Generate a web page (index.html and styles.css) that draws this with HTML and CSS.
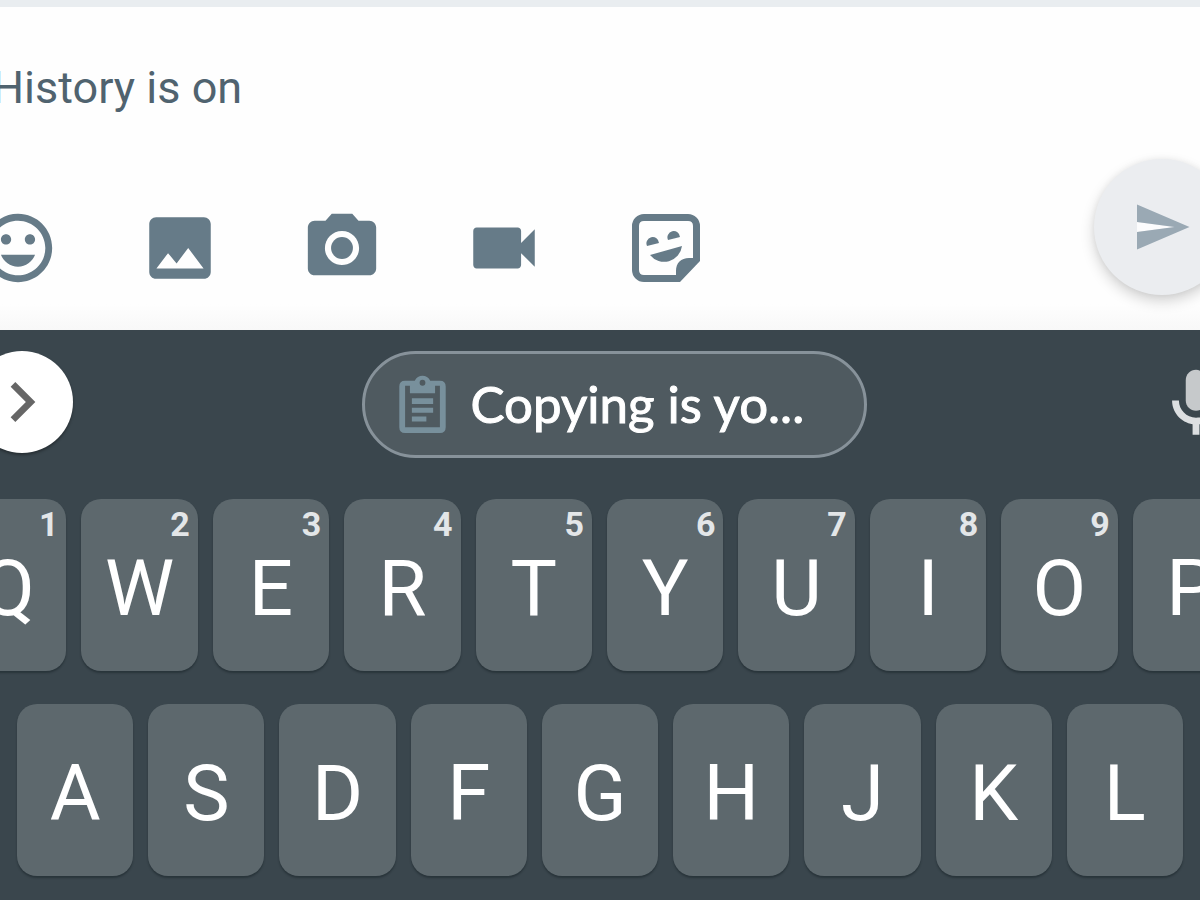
FILE: index.html
```html
<!DOCTYPE html>
<html lang="en">
<head>
<meta charset="utf-8">
<meta name="viewport" content="width=device-width, initial-scale=1">
<title>Chat</title>
<link rel="stylesheet" href="styles.css">
</head>
<body>
<main class="composer">
  <label class="history" for="message">History is on</label>
  <input class="message" id="message" type="text">
  <div class="tools">
    <div class="attachments">
      <button class="tool" type="button" aria-label="Emoji"><svg viewBox="0 0 24 24"><path d="M11.99 2C6.47 2 2 6.48 2 12s4.47 10 9.99 10C17.52 22 22 17.52 22 12S17.52 2 11.99 2zM12 20c-4.42 0-8-3.58-8-8s3.58-8 8-8 8 3.58 8 8-3.580 8-8 8zm3.500-9c.83 0 1.500-.67 1.500-1.500S16.330 8 15.500 8 14 8.670 14 9.500s.67 1.500 1.500 1.500zm-7 0c.83 0 1.500-.67 1.500-1.500S9.330 8 8.500 8 7 8.670 7 9.500 7.670 11 8.500 11zM7 14c.8 2.050 2.700 3.500 5 3.500s4.200-1.450 5-3.500z"/></svg></button>
      <button class="tool" type="button" aria-label="Image"><svg viewBox="0 0 24 24"><path fill-rule="evenodd" d="M21 19V5c0-1.100-.9-2-2-2H5c-1.100 0-2 .9-2 2v14c0 1.100.9 2 2 2h14c1.100 0 2-.9 2-2zM8.500 13.500L11 16.500 14.400 12 18.900 18H5.100z"/></svg></button>
      <button class="tool" type="button" aria-label="Camera"><svg viewBox="0 0 24 24"><circle cx="12" cy="12" r="3.200"/><path d="M9 2L7.170 4H4c-1.100 0-2 .9-2 2v12c0 1.100.9 2 2 2h16c1.100 0 2-.9 2-2V6c0-1.100-.9-2-2-2h-3.170L15 2H9zm3 15c-2.760 0-5-2.240-5-5s2.240-5 5-5 5 2.240 5 5-2.240 5-5 5z"/></svg></button>
      <button class="tool" type="button" aria-label="Video"><svg viewBox="0 0 24 24"><path d="M17 10.500V7c0-.55-.45-1-1-1H4c-.55 0-1 .45-1 1v10c0 .55.45 1 1 1h12c.55 0 1-.45 1-1v-3.500l4 4v-11l-4 4z"/></svg></button>
      <button class="tool" type="button" aria-label="Sticker"><svg viewBox="0 0 68 68"><path fill-rule="evenodd" d="M12 0H56A12 12 0 0 1 68 12V47L48 68H12A12 12 0 0 1 0 56V12A12 12 0 0 1 12 0zM12 7Q7 7 7 12V56Q7 61 12 61H44V57C44 49 49 44 57 44H61V12Q61 7 56 7z"/><path d="M15 32A6.300 6.300 0 1 1 27 29zM36 26A6.300 6.300 0 1 1 48 23zM18 41L50 32A18 18 0 0 1 18 41z"/></svg></button>
    </div>
    <button class="send" type="button" aria-label="Send"><svg viewBox="0 0 24 24"><path class="send-gap" d="M2 10l15 2-15 2z"/><path d="M2 21L23 12 2 3v7l15 2-15 2z"/></svg></button>
  </div>
</main>
<section class="keyboard" aria-label="Keyboard">
  <div class="strip">
    <button class="expand" type="button" aria-label="More"><svg viewBox="0 0 24 24"><path d="M10 6L8.590 7.410 13.170 12l-4.580 4.590L10 18l6-6z"/></svg></button>
    <button class="clip" type="button">
      <svg viewBox="0 0 48 60"><path fill-rule="evenodd" d="M6 6H16C19-1 29-1 32 6H42Q48 6 48 12V54Q48 60 42 60H6Q0 60 0 54V12Q0 6 6 6zM6 11V54H42V11H37V19H11V11zM24 5A3 3 0 1 0 24 11A3 3 0 1 0 24 5zM13 24H35V30H13zM13 34H35V39H13zM13 43H28V48H13z"/></svg>
      <span>Copying is yo...</span>
    </button>
    <button class="mic" type="button" aria-label="Voice input"><svg viewBox="0 0 24 24"><path class="mic-head" d="M12 14c1.660 0 3-1.340 3-3V5c0-1.660-1.340-3-3-3S9 3.340 9 5v6c0 1.660 1.340 3 3 3z"/><path d="M17 11c0 2.760-2.240 5-5 5s-5-2.240-5-5H5c0 3.530 2.610 6.430 6 6.920V21h2v-3.080c3.390-.49 6-3.390 6-6.920h-2z"/></svg></button>
  </div>
  <div class="row row-top">
    <button class="key" type="button">Q<span class="hint">1</span></button>
    <button class="key" type="button">W<span class="hint">2</span></button>
    <button class="key" type="button">E<span class="hint">3</span></button>
    <button class="key" type="button">R<span class="hint">4</span></button>
    <button class="key" type="button">T<span class="hint">5</span></button>
    <button class="key" type="button">Y<span class="hint">6</span></button>
    <button class="key" type="button">U<span class="hint">7</span></button>
    <button class="key" type="button">I<span class="hint">8</span></button>
    <button class="key" type="button">O<span class="hint">9</span></button>
    <button class="key" type="button">P</button>
  </div>
  <div class="row row-home">
    <button class="key" type="button">A</button>
    <button class="key" type="button">S</button>
    <button class="key" type="button">D</button>
    <button class="key" type="button">F</button>
    <button class="key" type="button">G</button>
    <button class="key" type="button">H</button>
    <button class="key" type="button">J</button>
    <button class="key" type="button">K</button>
    <button class="key" type="button">L</button>
  </div>
</section>
</body>
</html>
```
FILE: styles.css
```css
* {
  box-sizing: border-box;
}

body {
  margin: 0;
  min-height: 100vh;
  display: flex;
  flex-direction: column;
  overflow: hidden;
  background: #3a464d;
  font-family: Roboto, "Noto Sans", sans-serif;
}

button {
  margin: 0;
  padding: 0;
  border: 0;
  background: none;
  color: inherit;
  font: inherit;
  flex-shrink: 0;
}

svg {
  display: block;
  fill: currentColor;
}

.composer {
  display: flex;
  flex-direction: column;
  border-top: 7px solid #e9edf0;
  padding-top: 51px;
  background: linear-gradient(#fefefe 92%, #f8f8f8);
}

.history {
  margin-left: -8px;
  color: #50636f;
  font-size: 45px;
  line-height: 60px;
}

.message {
  height: 32px;
  border: 0;
  padding: 0;
  outline: 0;
  background: transparent;
  font: inherit;
}

.tools {
  display: flex;
  justify-content: space-between;
  align-items: flex-start;
  height: 180px;
  padding-top: 9px;
}

.attachments {
  display: flex;
  gap: 80px;
  margin: 48px 0 0 -23px;
}

.tool {
  display: flex;
  align-items: center;
  justify-content: center;
  width: 82px;
  height: 82px;
  color: #667b88;
}

.tool svg {
  width: 82px;
  height: 82px;
}

.tool:last-child svg {
  width: 68px;
  height: 68px;
}

.send {
  display: flex;
  align-items: center;
  justify-content: center;
  width: 136px;
  height: 136px;
  margin-right: -30px;
  border-radius: 50%;
  background: #ebedf0;
  color: #9aa9b4;
  box-shadow: 0 6px 14px rgba(0, 0, 0, 0.18), 0 0 6px rgba(0, 0, 0, 0.05);
}

.send svg {
  width: 60px;
  height: 60px;
}

.send-gap {
  fill: #fcfcfd;
}

.keyboard {
  flex: 1;
  color: #fff;
}

.strip {
  display: flex;
  align-items: flex-start;
  justify-content: space-between;
  height: 169px;
  padding-top: 21px;
}

.expand {
  display: flex;
  align-items: center;
  justify-content: center;
  width: 102px;
  height: 102px;
  margin-left: -29px;
  border-radius: 50%;
  background: #fff;
  color: #666;
  box-shadow: 0 2px 3px rgba(0, 0, 0, 0.35);
}

.expand svg {
  width: 80px;
  height: 80px;
}

.clip {
  display: flex;
  align-items: center;
  gap: 24px;
  width: 505px;
  height: 107px;
  padding: 0 33px 2px;
  border: 3px solid #87929a;
  border-radius: 54px;
  background: #4f5a60;
  font-family: Lato, "Open Sans", sans-serif;
  font-size: 51px;
  -webkit-text-stroke: 1px currentColor;
  line-height: 60px;
}

.clip svg {
  width: 49px;
  height: 58px;
  color: #78909c;
}

.mic {
  margin: 12px -37px 0 0;
  color: #dcdfe1;
}

.mic svg {
  width: 82px;
  height: 82px;
}

.mic-head {
  fill: #c6c9cb;
}

.row {
  display: flex;
  gap: 15px;
}

.row-top {
  margin: 0 -49px 33px -50px;
}

.row-home {
  margin: 0 17px 23px;
}

.key {
  position: relative;
  flex: 1;
  height: 172px;
  padding-top: 7px;
  border-radius: 20px;
  background: #5d686d;
  font-size: 78px;
  line-height: 90px;
  box-shadow: 0 2px 2px rgba(20, 30, 36, 0.45);
}

.hint {
  position: absolute;
  top: 5px;
  right: 8px;
  color: #e3e6e8;
  font-size: 34px;
  font-weight: 700;
  line-height: 40px;
}
```
